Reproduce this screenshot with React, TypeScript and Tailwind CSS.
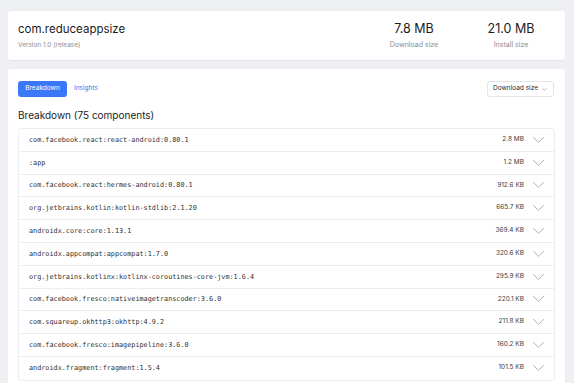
import { ChevronDown } from "lucide-react";

const components = [
  { name: "com.facebook.react:react-android:0.80.1", size: "2.8 MB" },
  { name: ":app", size: "1.2 MB" },
  { name: "com.facebook.react:hermes-android:0.80.1", size: "912.6 KB" },
  { name: "org.jetbrains.kotlin:kotlin-stdlib:2.1.20", size: "665.7 KB" },
  { name: "androidx.core:core:1.13.1", size: "369.4 KB" },
  { name: "androidx.appcompat:appcompat:1.7.0", size: "320.6 KB" },
  { name: "org.jetbrains.kotlinx:kotlinx-coroutines-core-jvm:1.6.4", size: "295.9 KB" },
  { name: "com.facebook.fresco:nativeimagetranscoder:3.6.0", size: "220.1 KB" },
  { name: "com.squareup.okhttp3:okhttp:4.9.2", size: "211.8 KB" },
  { name: "com.facebook.fresco:imagepipeline:3.6.0", size: "160.2 KB" },
  { name: "androidx.fragment:fragment:1.5.4", size: "101.5 KB" },
];

const Stat = ({ value, label }: { value: string; label: string }) => (
  <div className="flex w-[72px] flex-col items-center">
    <span className="text-[12.5px] leading-[16px] text-[#1c1c1e]">{value}</span>
    <span className="mt-[3px] text-[7px] leading-[10px] text-[#8a8d93]">{label}</span>
  </div>
);

export default function App() {
  return (
    <div className="flex h-[383px] flex-col gap-[9px] overflow-hidden bg-[#eef0f3] pt-[11px] pr-[9px] pl-[8px] font-['Inter',sans-serif]">
      <section className="flex h-[49px] shrink-0 items-center justify-between rounded-[3px] bg-white pr-[18px] pl-[10px] shadow-[0_1px_2px_rgba(0,0,0,0.06)]">
        <div className="flex flex-col">
          <h1 className="text-[11.5px] leading-[16px] text-[#1c1c1e]">com.reduceappsize</h1>
          <p className="mt-[3px] text-[6.5px] leading-[10px] text-[#8a8d93]">Version 1.0 (release)</p>
        </div>
        <div className="flex gap-[25px]">
          <Stat value="7.8 MB" label="Download size" />
          <Stat value="21.0 MB" label="Install size" />
        </div>
      </section>

      <section className="flex-1 rounded-t-[3px] bg-white px-[10px] pt-[12px] shadow-[0_1px_2px_rgba(0,0,0,0.06)]">
        <div className="flex items-center justify-between">
          <div className="flex items-center gap-[7px]">
            <button className="h-[16px] w-[49px] rounded-[3px] bg-[#3a78f7] text-[6.5px] text-white">Breakdown</button>
            <button className="text-[6.5px] text-[#3a78f7]">Insights</button>
          </div>
          <button className="mr-[1px] flex h-[16px] w-[67px] items-center justify-center gap-[3px] rounded-[3px] border border-[#e3e5e8] text-[6.5px] text-[#2a2a2e]">
            Download size
            <ChevronDown size={7} strokeWidth={1.5} className="text-[#666]" />
          </button>
        </div>

        <h2 className="mt-[11px] text-[10px] leading-[14px] text-[#1c1c1e]">Breakdown (75 components)</h2>

        <div className="mt-[6px] rounded-[3px] border border-[#eceef1]">
          {components.map((c) => (
            <div
              key={c.name}
              className="flex h-[22.8px] items-center justify-between border-b border-[#eceef1] pr-[10px] pl-[10px] last:border-b-0"
            >
              <span className="font-['DejaVu_Sans_Mono',monospace] text-[6.8px] text-[#2f2f33]">{c.name}</span>
              <div className="flex items-center gap-[9px]">
                <span className="text-[6.5px] text-[#3a3a3e]">{c.size}</span>
                <svg width="11" height="6" viewBox="0 0 11 6" fill="none" className="text-[#9a9ca2]">
                  <path d="M0.5 0.5l5 4.8 5-4.8" stroke="currentColor" strokeWidth="0.8" strokeLinecap="round" strokeLinejoin="round" />
                </svg>
              </div>
            </div>
          ))}
        </div>
      </section>
    </div>
  );
}
